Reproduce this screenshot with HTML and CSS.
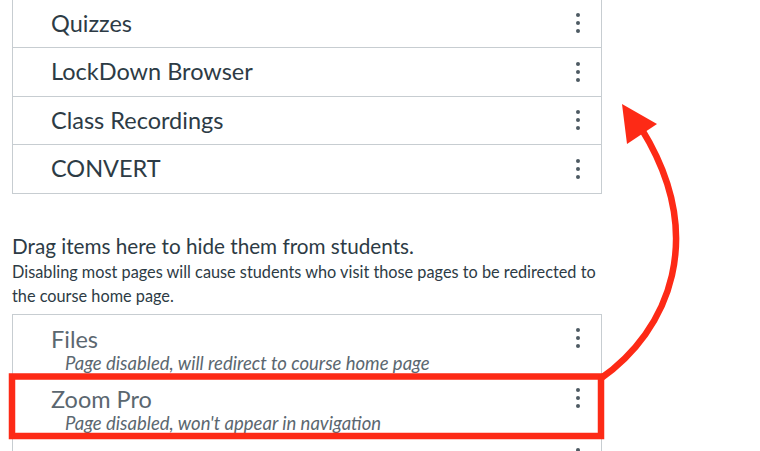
FILE: index.html
```html
<!DOCTYPE html>
<html lang="en">
<head>
    <meta charset="UTF-8">
    <title>Navigation</title>
    <link rel="stylesheet" href="styles.css">
</head>
<body>
    <div class="page">
        <ul class="nav-list enabled">
            <li class="nav-item">
                <span class="nav-name">Quizzes</span>
                <svg class="kebab" width="6" height="22" viewBox="0 0 6 22"><circle cx="3" cy="3" r="2"/><circle cx="3" cy="11" r="2"/><circle cx="3" cy="19" r="2"/></svg>
            </li>
            <li class="nav-item">
                <span class="nav-name">LockDown Browser</span>
                <svg class="kebab" width="6" height="22" viewBox="0 0 6 22"><circle cx="3" cy="3" r="2"/><circle cx="3" cy="11" r="2"/><circle cx="3" cy="19" r="2"/></svg>
            </li>
            <li class="nav-item">
                <span class="nav-name">Class Recordings</span>
                <svg class="kebab" width="6" height="22" viewBox="0 0 6 22"><circle cx="3" cy="3" r="2"/><circle cx="3" cy="11" r="2"/><circle cx="3" cy="19" r="2"/></svg>
            </li>
            <li class="nav-item">
                <span class="nav-name">CONVERT</span>
                <svg class="kebab" width="6" height="22" viewBox="0 0 6 22"><circle cx="3" cy="3" r="2"/><circle cx="3" cy="11" r="2"/><circle cx="3" cy="19" r="2"/></svg>
            </li>
        </ul>

        <h2 class="drop-title">Drag items here to hide them from students.</h2>
        <p class="drop-help">Disabling most pages will cause students who visit those pages to be redirected to the course home page.</p>

        <ul class="nav-list disabled">
            <li class="nav-item">
                <div class="nav-text">
                    <span class="nav-name">Files</span>
                    <span class="nav-note">Page disabled, will redirect to course home page</span>
                </div>
                <svg class="kebab" width="6" height="22" viewBox="0 0 6 22"><circle cx="3" cy="3" r="2"/><circle cx="3" cy="11" r="2"/><circle cx="3" cy="19" r="2"/></svg>
            </li>
            <li class="nav-item">
                <div class="nav-text">
                    <span class="nav-name">Zoom Pro</span>
                    <span class="nav-note">Page disabled, won't appear in navigation</span>
                </div>
                <svg class="kebab" width="6" height="22" viewBox="0 0 6 22"><circle cx="3" cy="3" r="2"/><circle cx="3" cy="11" r="2"/><circle cx="3" cy="19" r="2"/></svg>
            </li>
            <li class="nav-item">
                <div class="nav-text">
                    <span class="nav-name">Library Guides</span>
                    <span class="nav-note">Page disabled, won't appear in navigation</span>
                </div>
                <svg class="kebab" width="6" height="22" viewBox="0 0 6 22"><circle cx="3" cy="3" r="2"/><circle cx="3" cy="11" r="2"/><circle cx="3" cy="19" r="2"/></svg>
            </li>
        </ul>

        <!-- callout drawn over the list: box round Zoom Pro and arrow up to the enabled list -->
        <svg class="callout" width="760" height="451" viewBox="0 0 760 451">
            <rect x="12" y="376.5" width="589" height="59.5" fill="none" stroke="#fd2a16" stroke-width="6.5"/>
            <path d="M600 379 C 670 330, 708 236, 641 128" fill="none" stroke="#fd2a16" stroke-width="6.5"/>
            <polygon points="622,104 657,124 627,144" fill="#fd2a16"/>
        </svg>
    </div>
</body>
</html>
```

FILE: styles.css
```css
body {
    margin: 0;
    background: #fff;
    font-family: Lato, "Noto Sans", sans-serif;
    color: #2d3b45;
    overflow: hidden;
}
.page {
    position: relative;
    height: 451px;
    padding: 0 12px;
    overflow: hidden;
}
.nav-list {
    list-style: none;
    margin: 0;
    padding: 0;
    width: 588px;
    border: 1px solid #c7cdd1;
    border-top: none;
}
.nav-list.enabled {
    margin-top: -1.5px;
}
.nav-list.disabled {
    border-top: 1px solid #c7cdd1;
}
.nav-item {
    display: flex;
    align-items: center;
    justify-content: space-between;
    padding: 0 20px 0 38px;
    border-top: 1px solid #c7cdd1;
}
.enabled .nav-item {
    height: 47.5px;
}
.disabled .nav-item {
    align-items: flex-start;
    height: 60px;
    padding-top: 11px;
    box-sizing: border-box;
}
.disabled .nav-item:first-child {
    border-top: none;
    height: 59px;
}
.nav-name {
    font-size: 23.5px;
    line-height: 27px;
}
.nav-text {
    display: flex;
    flex-direction: column;
}
.disabled .nav-name {
    color: #5b6770;
}
.nav-note {
    padding-left: 14px;
    font-size: 18.5px;
    line-height: 20px;
    font-style: italic;
    color: #5b6770;
}
.kebab {
    fill: #4d5a63;
    flex-shrink: 0;
}
.disabled .kebab {
    margin-top: 1px;
}
.drop-title {
    margin: 38.5px 0 0;
    font-size: 20.7px;
    font-weight: 400;
    line-height: 28px;
}
.drop-help {
    margin: 0 0 6px;
    width: 600px;
    font-size: 16.3px;
    line-height: 24px;
}
.callout {
    position: absolute;
    top: 0;
    left: 0;
    pointer-events: none;
}
```
